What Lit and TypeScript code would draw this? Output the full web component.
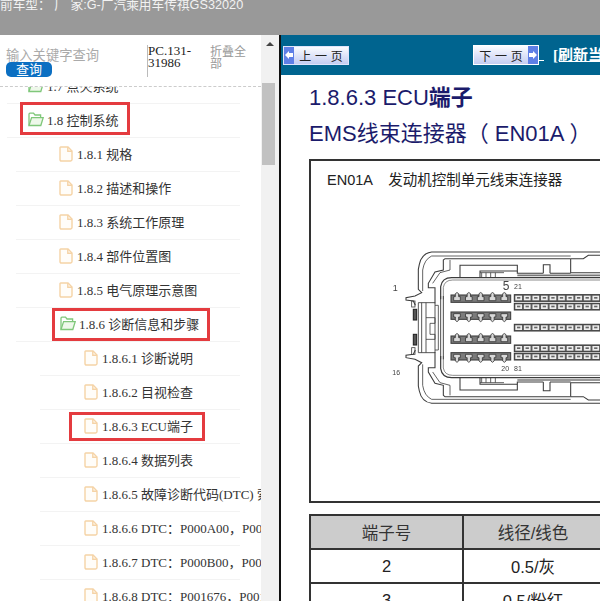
import { LitElement, html, svg, css } from "lit";
import { customElement } from "lit/decorators.js";

type Row = { t: string; l: number; folder?: boolean; mark?: number };

const rows: Row[] = [
  { t: "1.7 点火系统", l: 1, folder: true },
  { t: "1.8 控制系统", l: 1, folder: true, mark: 1 },
  { t: "1.8.1 规格", l: 2 },
  { t: "1.8.2 描述和操作", l: 2 },
  { t: "1.8.3 系统工作原理", l: 2 },
  { t: "1.8.4 部件位置图", l: 2 },
  { t: "1.8.5 电气原理示意图", l: 2 },
  { t: "1.8.6 诊断信息和步骤", l: 2, folder: true, mark: 2 },
  { t: "1.8.6.1 诊断说明", l: 3 },
  { t: "1.8.6.2 目视检查", l: 3 },
  { t: "1.8.6.3 ECU端子", l: 3, mark: 3 },
  { t: "1.8.6.4 数据列表", l: 3 },
  { t: "1.8.6.5 故障诊断代码(DTC) 索引", l: 3 },
  { t: "1.8.6.6 DTC：P000A00，P000A01", l: 3 },
  { t: "1.8.6.7 DTC：P000B00，P000B01", l: 3 },
  { t: "1.8.6.8 DTC：P001676，P001677", l: 3 },
];

const folderIcon = html`<svg class="ic-folder" viewBox="0 0 16 15" fill="none" stroke="#7fc77a" stroke-width="1.3">
  <path d="M1 13.5V2.2Q1 1.2 2 1.2H5.5L7 3H12.6V5.4" />
  <path d="M1 13.5L3.6 5.6H15.2L12.8 13.5Z" fill="#eef8ea" />
</svg>`;

const fileIcon = html`<svg class="ic-file" viewBox="0 0 14 16" fill="none" stroke="#f5d3a6" stroke-width="1.4">
  <path d="M1.7 1H9L13 5V13.6Q13 15 11.6 15H2.4Q1 15 1 13.6V1.7Q1 1 1.7 1Z" fill="#fffdf9" />
  <path d="M8.8 1V5.2H13" />
</svg>`;

function bigPin(x: number, y: number, up: boolean) {
  const d = up
    ? `M${x + 7},${y + 29} V${y + 17} H${x + 12} V${y + 8} Q${x + 17},${y + 1} ${x + 22},${y + 8} V${y + 17} H${x + 27} V${y + 29} Z`
    : `M${x + 7},${y + 5} H${x + 27} V${y + 15} H${x + 22} V${y + 25} Q${x + 17},${y + 33} ${x + 12},${y + 25} V${y + 15} H${x + 7} Z`;
  return svg`<path d=${d} fill="#d8d8d8" stroke="#333" stroke-width="2.4" />`;
}

function pinRow(y: number, up: boolean) {
  const band = up ? y + 12 : y;
  return svg`<rect x="213" y=${band} width="179" height="22" fill="#7b7b7b" />
    ${[0, 1, 2, 3, 4].map((i) => bigPin(214 + i * 35.5, y, up))}`;
}

function cellRow(y: number, h = 20) {
  return svg`<rect x="403" y=${y} width="258" height=${h} fill="#5c5c5c" />
    ${[0, 1, 2, 3, 4, 5, 6, 7, 8, 9].map(
      (i) => svg`<rect x=${406 + i * 25.7} y=${y + 3} width="20" height=${h - 6} fill="#eee" stroke="none" />
        <rect x=${411 + i * 25.7} y=${y + 7} width="10" height="5" fill="#666" stroke="none" />`
    )}`;
}

const shellHalf = svg`
  <path d="M660,18H155Q125,22 118,55L115,70V130L125,140L105,150L78,155V162L100,165L106,178" />
  <path d="M572,38V80H660M572,38H610L625,28H660" />
  <path d="M572,38H195L190,42V72L165,78L145,112V125H165V172" />
  <path d="M128,135V72Q133,40 155,30H572" stroke-width="2.4" />
  <path d="M210,42V72L180,80L158,112" stroke-width="2.4" />
  <path d="M182,160V122Q186,95 215,95H660" stroke-width="3.6" />
  <path d="M190,160V124Q194,102 218,102H660" stroke-width="1.8" />
  <path d="M240,95V58H412V75H300V95" />
  <path d="M305,80V95M318,80V95M332,80V95M346,80V95M300,80H372" stroke-width="2.4" />
  <path d="M412,75V82H490M510,82H572M490,82V56H510V82" />
  <path d="M412,88H660" stroke-width="5" stroke="#777" />
`;

const diagram = svg`<svg class="conn" viewBox="0 0 660 480" fill="none" stroke="#3c3c3c" stroke-width="3.2">
  ${shellHalf}
  <g transform="translate(0 490) scale(1 -1)">${shellHalf}</g>
  <path d="M182,150V340M190,150V340" stroke-width="2.8" />
  <path d="M115,170H165V320H115Z M125,170V320M138,170V320" stroke-width="2.6" />
  <path d="M138,215H165V232H150V265H165V280H138" stroke-width="2.4" />
  <path d="M165,178H175V312H165" stroke-width="2.4" />
  <rect x="100" y="190" width="10" height="32" fill="#555" stroke="#222" />
  <rect x="100" y="265" width="10" height="32" fill="#555" stroke="#222" />
  <rect x="95" y="165" width="10" height="18" stroke-width="2.4" />
  <rect x="95" y="305" width="10" height="20" stroke-width="2.4" />
  ${pinRow(135, true)}
  ${pinRow(198, false)}
  ${pinRow(258, true)}
  ${pinRow(320, false)}
  ${cellRow(146)}
  ${cellRow(172)}
  ${cellRow(235)}
  ${cellRow(297)}
  ${cellRow(322)}
  <g class="nums" stroke="none" fill="#444">
    <text x="38" y="136" font-size="27">1</text>
    <text x="37" y="388" font-size="21">16</text>
    <text x="368" y="131" font-size="36">5</text>
    <text x="402" y="130" font-size="21">21</text>
    <text x="364" y="376" font-size="21">20</text>
    <text x="402" y="376" font-size="21">81</text>
  </g>
</svg>`;

@customElement("app-root")
export class AppRoot extends LitElement {
  static styles = css`
    :host {
      display: block;
      width: 600px;
      height: 601px;
      overflow: hidden;
      background: #fff;
      font-family: "Liberation Serif", "Noto Sans CJK SC", serif;
    }
    .top {
      height: 35px;
      background: #999;
      color: #f2f2f2;
      font: 12.7px/14px "Liberation Sans", "Noto Sans CJK SC", sans-serif;
      white-space: pre;
      overflow: hidden;
    }
    .top span {
      display: block;
      margin-top: -2px;
    }
    .main {
      display: flex;
      height: 566px;
    }
    .left {
      width: 261px;
      flex: none;
      display: flex;
      flex-direction: column;
      overflow: hidden;
    }
    .head {
      height: 52px;
      flex: none;
      box-sizing: border-box;
      border-bottom: 1px dashed #ccc;
      display: flex;
      font-size: 13px;
      line-height: 13px;
    }
    .search {
      width: 147px;
      flex: none;
      padding: 14px 0 0 6px;
      box-sizing: border-box;
      font-family: "Liberation Sans", "Noto Sans CJK SC", sans-serif;
    }
    .ph {
      color: #aaa;
      font-size: 13.3px;
      line-height: 13px;
      white-space: nowrap;
    }
    .go {
      width: 46px;
      height: 15px;
      border-radius: 5px;
      background: #0b6fc2;
      color: #fff;
      text-align: center;
      font-size: 13px;
      line-height: 15px;
    }
    .pc {
      width: 63px;
      flex: none;
      box-sizing: border-box;
      height: 32px;
      margin-top: 10px;
      border-left: 1px solid #bbb;
      color: #222;
      font-size: 13px;
      line-height: 12px;
    }
    .fold {
      width: 38px;
      margin-top: 11px;
      color: #999;
      font-size: 12px;
      line-height: 12px;
      font-family: "Liberation Sans", "Noto Sans CJK SC", sans-serif;
    }
    .tree {
      flex: 1;
      overflow: hidden;
      position: relative;
    }
    .list {
      margin-top: -17px;
      width: 240px;
    }
    .row {
      position: relative;
      box-sizing: border-box;
      height: 34px;
      padding-bottom: 2px;
      display: flex;
      align-items: center;
      border-bottom: 1px solid #f3f3f3;
      white-space: nowrap;
      font-size: 13px;
      color: #333;
    }
    .l1 {
      margin-left: 7px;
      padding-left: 21px;
    }
    .l2 {
      margin-left: 16px;
      padding-left: 43px;
    }
    .l3 {
      margin-left: 40px;
      padding-left: 44px;
    }
    .row.l2.f {
      padding-left: 44px;
    }
    .ic-folder {
      width: 16px;
      height: 15px;
      margin-right: 3px;
      flex: none;
    }
    .ic-file {
      width: 14px;
      height: 16px;
      margin-right: 4px;
      flex: none;
    }
    .mark {
      position: absolute;
      box-sizing: border-box;
      border: 3px solid #e43b3f;
    }
    .m1 {
      left: 13px;
      top: -2px;
      width: 110px;
      height: 33px;
    }
    .m2 {
      left: 36px;
      top: 0;
      width: 158px;
      height: 33px;
    }
    .m3 {
      left: 29px;
      top: 2px;
      width: 136px;
      height: 29px;
    }
    .bar {
      width: 18px;
      flex: none;
      background: #f1f1f1;
      display: flex;
      flex-direction: column;
      align-items: center;
    }
    .arrow {
      width: 0;
      height: 0;
      margin-top: 7px;
      border: 4px solid transparent;
      border-top: 0;
      border-bottom: 4px solid #444;
    }
    .thumb {
      width: 13px;
      height: 82px;
      margin-top: 37px;
      margin-right: 3px;
      background: #c1c1c1;
    }
    .right {
      flex: 1;
      min-width: 0;
      border-left: 2px solid #111;
      overflow: hidden;
    }
    .nav {
      height: 40px;
      background: #00648f;
      display: flex;
      align-items: center;
      padding-left: 2px;
      white-space: nowrap;
      overflow: hidden;
      color: #fff;
    }
    .btn {
      width: 66px;
      height: 19px;
      box-sizing: border-box;
      flex: none;
      display: flex;
      align-items: center;
      background: linear-gradient(#fbfcff, #c4cdf2);
      color: #222;
      font: 12px/17px "Noto Sans CJK SC", sans-serif;
      border: 1px solid #dfe4fb;
    }
    .btn b {
      flex: 1;
      font-weight: 400;
      text-align: center;
      white-space: pre;
      word-spacing: 1px;
    }
    .cap {
      width: 10px;
      height: 100%;
      flex: none;
      background: #5f7fe6;
      display: flex;
      align-items: center;
      justify-content: center;
    }
    .cap svg {
      width: 8px;
      height: 8px;
    }
    .next {
      margin-left: 124px;
      border: 1px solid #fff;
      height: 20px;
    }
    .gap {
      width: 5px;
      margin-right: 9px;
      height: 11px;
      border-bottom: 1px solid #fff;
      flex: none;
    }
    .refresh {
      font: 700 15px/17px "Liberation Serif", "Noto Sans CJK SC", serif;
      text-decoration: underline;
      color: #fff;
    }
    .doc {
      padding: 0 0 0 28px;
      color: #1b1b6b;
      font-family: "Liberation Sans", "Noto Sans CJK SC", sans-serif;
      width: 400px;
    }
    h1 {
      margin: 0;
      font-size: 22px;
      font-weight: 400;
      line-height: 30px;
      padding-top: 8px;
      white-space: pre;
    }
    h1 b {
      font-weight: 700;
    }
    h1 + h1 {
      padding-top: 6px;
    }
    .box {
      margin-top: 10px;
      height: 344px;
      box-sizing: border-box;
      border: 2px solid #333;
      padding: 10px 0 0 16px;
      color: #222;
      font-size: 14.5px;
      line-height: 18px;
      white-space: pre;
    }
    .conn {
      display: block;
      width: 220px;
      height: 160px;
      margin: 57px 0 0 53px;
      filter: blur(0.35px);
    }
    .nums {
      font-family: "Liberation Sans", sans-serif;
    }
    .tbl {
      margin-top: 11px;
      width: 293px;
      display: grid;
      grid-template-columns: 153px 1fr;
      grid-template-rows: 34px 34px 34px;
      border: solid #333;
      border-width: 2px 0 0 2px;
      color: #222;
      font-size: 16.5px;
    }
    .tbl > div {
      border: solid #333;
      border-width: 0 2px 2px 0;
      display: flex;
      align-items: center;
      justify-content: center;
    }
    .tbl > .hd {
      background: #ccc;
      color: #333;
    }
  `;

  render() {
    return html`
      <div class="top"><span>前车型： 厂 家:G-广汽乘用车传祺GS32020</span></div>
      <div class="main">
        <div class="left">
          <div class="head">
            <div class="search">
              <div class="ph">输入关键字查询</div>
              <div class="go">查询</div>
            </div>
            <div class="pc">PC.131-31986</div>
            <div class="fold">折叠全部</div>
          </div>
          <div class="tree">
            <div class="list">
              ${rows.map(
                (r) => html`<div class="row l${r.l} ${r.folder ? "f" : ""}">
                  ${r.folder ? folderIcon : fileIcon}<span>${r.t}</span>
                  ${r.mark ? html`<i class="mark m${r.mark}"></i>` : ""}
                </div>`
              )}
            </div>
          </div>
        </div>
        <div class="bar">
          <div class="arrow"></div>
          <div class="thumb"></div>
        </div>
        <div class="right">
          <div class="nav">
            <div class="btn">
              <span class="cap"><svg viewBox="0 0 8 8"><path d="M0 4L4 0V2H8V6H4V8Z" fill="#fff" /></svg></span>
              <b>上 一 页</b>
            </div>
            <div class="btn next">
              <b>下 一 页</b>
              <span class="cap"><svg viewBox="0 0 8 8"><path d="M8 4L4 0V2H0V6H4V8Z" fill="#fff" /></svg></span>
            </div>
            <span class="gap"></span>
            <span class="refresh">[刷新当前页]</span>
          </div>
          <div class="doc">
            <h1>1.8.6.3 ECU<b>端子</b></h1>
            <h1>EMS线束连接器（ EN01A ）</h1>
            <div class="box">EN01A    发动机控制单元线束连接器${diagram}</div>
            <div class="tbl">
              <div class="hd">端子号</div>
              <div class="hd">线径/线色</div>
              <div>2</div>
              <div>0.5/灰</div>
              <div>3</div>
              <div>0.5/粉红</div>
            </div>
          </div>
        </div>
      </div>
    `;
  }
}
